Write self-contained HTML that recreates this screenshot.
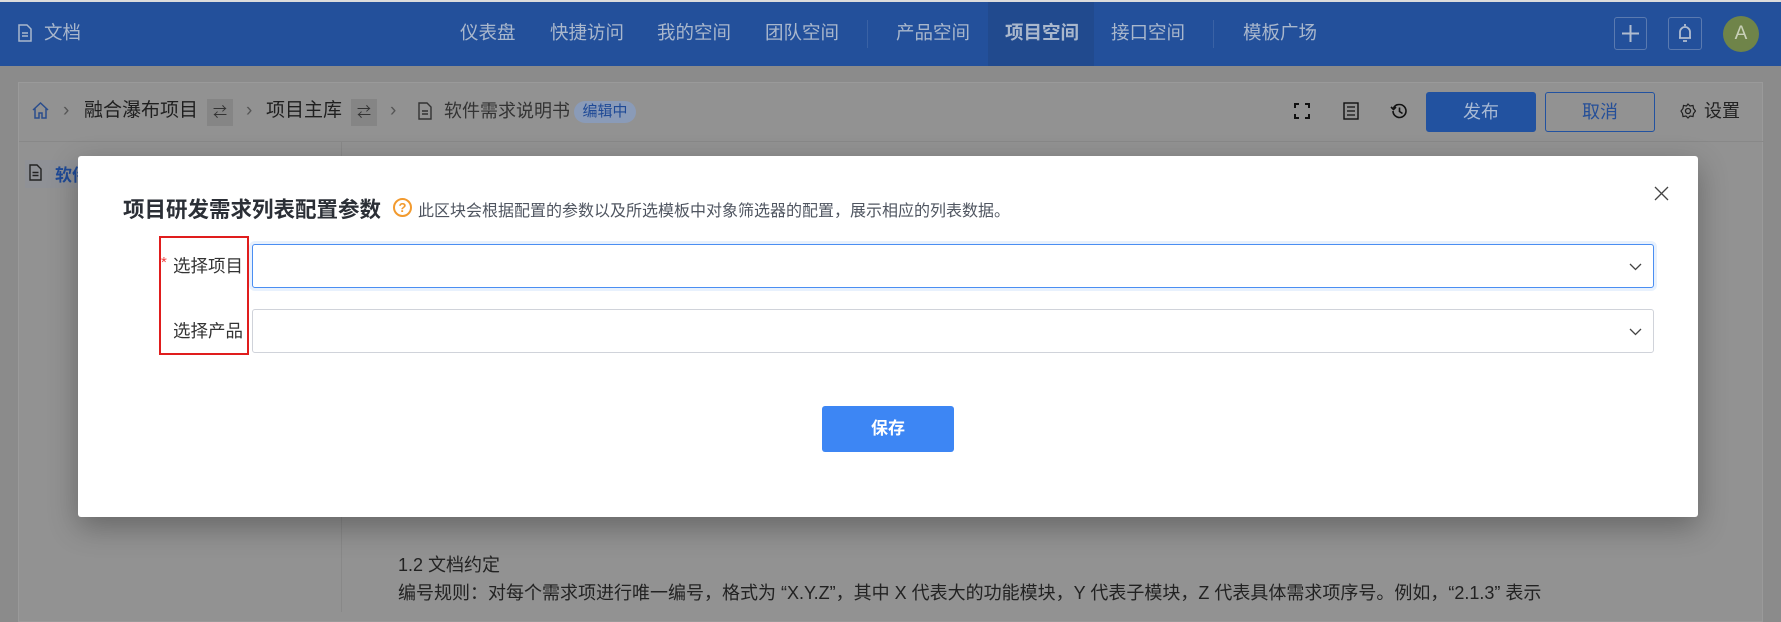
<!DOCTYPE html>
<html><head><meta charset="utf-8"><style>
*{margin:0;padding:0;box-sizing:border-box}
body{width:1781px;height:595px;overflow:hidden;background:#8b8b8b;font-family:"Liberation Sans","Noto Sans CJK SC",sans-serif;position:relative}
.hdr{position:absolute;left:0;top:0;width:1781px;height:66px;background:#23509b;border-top:2px solid #dcdcdc}
.hdr .t{position:absolute;top:0;height:64px;line-height:62px;color:#a9b7cc;font-size:18.5px}
.abs{position:absolute}
.card{position:absolute;left:18px;top:82px;width:1745px;height:540px;background:#929292;border:1px solid #9a9a9a}
.bc{position:absolute;top:97px;height:28px;line-height:28px;font-size:19px;color:#1f1f1f}
.btn{position:absolute;top:92px;height:40px;line-height:38px;text-align:center;font-size:18px;border-radius:3px}
.modal{position:absolute;left:78px;top:156px;width:1620px;height:361px;background:#fff;border-radius:3px;box-shadow:0 10px 30px rgba(0,0,0,.3)}
.inp{position:absolute;left:174px;width:1402px;height:44px;border:1px solid #d0d3da;border-radius:3px;background:#fff}
.lbl{position:absolute;font-size:17px;color:#333}
</style></head><body>
<div class="hdr">
 <svg class="abs" style="left:18px;top:22px" width="14" height="18" viewBox="0 0 14 18"><path d="M1 1h8l4 4v12H1z M4 9h6 M4 12h6" fill="none" stroke="#a9b7cc" stroke-width="1.5"/></svg>
 <div class="t" style="left:44px">文档</div>
 <div class="t" style="left:460px">仪表盘</div>
 <div class="t" style="left:550px">快捷访问</div>
 <div class="t" style="left:657px">我的空间</div>
 <div class="t" style="left:765px">团队空间</div>
 <div class="abs" style="left:867px;top:18px;width:1px;height:28px;background:#3a62a5"></div>
 <div class="t" style="left:896px">产品空间</div>
 <div class="abs" style="left:988px;top:0;width:106px;height:64px;background:#214a8e"></div>
 <div class="t" style="left:1005px;font-weight:bold">项目空间</div>
 <div class="t" style="left:1111px">接口空间</div>
 <div class="abs" style="left:1213px;top:18px;width:1px;height:28px;background:#3a62a5"></div>
 <div class="t" style="left:1243px">模板广场</div>
 <div class="abs" style="left:1614px;top:15px;width:33px;height:33px;border:1px solid #5a7ab0;border-radius:3px"></div>
 <svg class="abs" style="left:1620px;top:21px" width="21" height="21"><path d="M10.5 2v17M2 10.5h17" stroke="#b0bccf" stroke-width="2"/></svg>
 <div class="abs" style="left:1668px;top:15px;width:34px;height:33px;border:1px solid #5a7ab0;border-radius:3px"></div>
 <svg class="abs" style="left:1676px;top:20px" width="18" height="22"><path d="M9 2v2M4 16V10a5 5 0 0110 0v6H3h12M7 19h4" stroke="#b0bccf" stroke-width="1.8" fill="none"/></svg>
 <div class="abs" style="left:1723px;top:14px;width:36px;height:36px;border-radius:50%;background:#6f8449;color:#c9d0b8;text-align:center;line-height:36px;font-size:19px">A</div>
</div>
<div class="card">
 <div class="abs" style="left:0;top:58px;width:1745px;height:1px;background:#888"></div>
 <div class="abs" style="left:322px;top:59px;width:1px;height:470px;background:#888"></div>
 <div class="abs" style="left:6px;top:77px;width:310px;height:28px;background:#8f9196"></div>
</div>
<svg class="abs" style="left:32px;top:101px" width="17" height="18"><path d="M1 9L8.5 2 16 9M3 7.5V17h4v-5h3v5h4V7.5" fill="none" stroke="#2a4d8c" stroke-width="1.5"/></svg>
<div class="bc" style="left:63px;color:#555">›</div>
<div class="bc" style="left:84px">融合瀑布项目</div>
<div class="abs" style="left:207px;top:99px;width:26px;height:27px;background:#858585;color:#333;text-align:center;line-height:27px;font-size:14px">⇄</div>
<div class="bc" style="left:246px;color:#555">›</div>
<div class="bc" style="left:266px">项目主库</div>
<div class="abs" style="left:351px;top:99px;width:26px;height:27px;background:#858585;color:#333;text-align:center;line-height:27px;font-size:14px">⇄</div>
<div class="bc" style="left:390px;color:#555">›</div>
<svg class="abs" style="left:418px;top:102px" width="14" height="18"><path d="M1 1h8l4 4v12H1z M4 9h6 M4 12h6" fill="none" stroke="#333" stroke-width="1.4"/></svg>
<div class="bc" style="left:444px;color:#333;font-size:18px">软件需求说明书</div>
<div class="abs" style="left:574px;top:101px;width:62px;height:22px;border-radius:11px;background:#8a9bb8;color:#1f4a96;font-size:15px;line-height:22px;text-align:center">编辑中</div>
<svg class="abs" style="left:1294px;top:103px" width="16" height="16"><path d="M1 5V1h4M11 1h4v4M15 11v4h-4M5 15H1v-4" fill="none" stroke="#111" stroke-width="2"/></svg>
<svg class="abs" style="left:1343px;top:102px" width="16" height="18"><rect x="1" y="1" width="14" height="16" fill="none" stroke="#111" stroke-width="1.4"/><path d="M4 5h8M4 9h8M4 13h8" stroke="#111" stroke-width="1.3"/></svg>
<svg class="abs" style="left:1390px;top:102px" width="18" height="18"><path d="M3 9a6.5 6.5 0 106.5-6.5A6.5 6.5 0 003.5 6M1 5l2.5 2.5L6 5M9.5 5.5V9.5l3 2" fill="none" stroke="#111" stroke-width="1.6"/></svg>
<div class="btn" style="left:1426px;width:110px;background:#2252a0;color:#a9bad4;border:1px solid #2252a0">发布</div>
<div class="btn" style="left:1545px;width:110px;border:1.5px solid #2252a0;color:#254f98">取消</div>
<svg class="abs" style="left:1680px;top:103px" width="16" height="16"><circle cx="8" cy="8" r="2.5" fill="none" stroke="#222" stroke-width="1.3"/><path d="M8 1l2 2 3-.5.5 3 2 2.5-2 2.5-.5 3-3-.5-2 2-2-2-3 .5-.5-3L1 8l2-2.5.5-3 3 .5z" fill="none" stroke="#222" stroke-width="1.2"/></svg>
<div class="bc" style="left:1704px;color:#222;font-size:18px">设置</div>
<svg class="abs" style="left:29px;top:164px" width="13" height="17"><path d="M1 1h7l4 4v11H1z M3.5 8.5h6 M3.5 11.5h6" fill="none" stroke="#222" stroke-width="1.4"/></svg>
<div class="abs" style="left:55px;top:161px;font-size:17px;font-weight:bold;color:#1f4a96">软件</div>
<div class="abs" style="left:398px;top:551px;font-size:18px;color:#222">1.2 文档约定</div>
<div class="abs" style="left:398px;top:579px;font-size:18px;color:#222;white-space:nowrap">编号规则：对每个需求项进行唯一编号，格式为 “X.Y.Z”，其中 X 代表大的功能模块，Y 代表子模块，Z 代表具体需求项序号。例如，“2.1.3” 表示</div>
<div class="modal">
 <div class="abs" style="left:45px;top:37px;font-size:21.5px;font-weight:bold;color:#2b2f36">项目研发需求列表配置参数</div>
 <div class="abs" style="left:315px;top:42px;width:19px;height:19px;border:2px solid #f29a2e;border-radius:50%;color:#f29a2e;font-size:13px;line-height:15px;text-align:center;font-weight:bold">?</div>
 <div class="abs" style="left:340px;top:41px;font-size:16px;color:#4f5560;white-space:nowrap">此区块会根据配置的参数以及所选模板中对象筛选器的配置，展示相应的列表数据。</div>
 <svg class="abs" style="left:1576px;top:30px" width="15" height="15"><path d="M1 1l13 13M14 1L1 14" stroke="#444" stroke-width="1.3"/></svg>
 <div class="abs" style="left:81px;top:80px;width:90px;height:119px;border:2px solid #e01d1d"></div>
 <div class="lbl" style="left:83px;top:98px;color:#f04040;font-size:15px">*</div>
 <div class="lbl" style="left:95px;top:97px;font-size:17.5px">选择项目</div>
 <div class="lbl" style="left:95px;top:162px;font-size:17.5px">选择产品</div>
 <div class="inp" style="top:88px;border-color:#4a8ef2;box-shadow:0 0 0 3px #e8f1fd"></div>
 <div class="inp" style="top:153px"></div>
 <svg class="abs" style="left:1551px;top:107px" width="13" height="8"><path d="M1 1l5.5 5.5L12 1" fill="none" stroke="#444" stroke-width="1.3"/></svg>
 <svg class="abs" style="left:1551px;top:172px" width="13" height="8"><path d="M1 1l5.5 5.5L12 1" fill="none" stroke="#444" stroke-width="1.3"/></svg>
 <div class="abs" style="left:744px;top:250px;width:132px;height:46px;background:#3d86f4;border-radius:3px;color:#fff;font-size:17px;font-weight:bold;text-align:center;line-height:46px">保存</div>
</div>
</body></html>
